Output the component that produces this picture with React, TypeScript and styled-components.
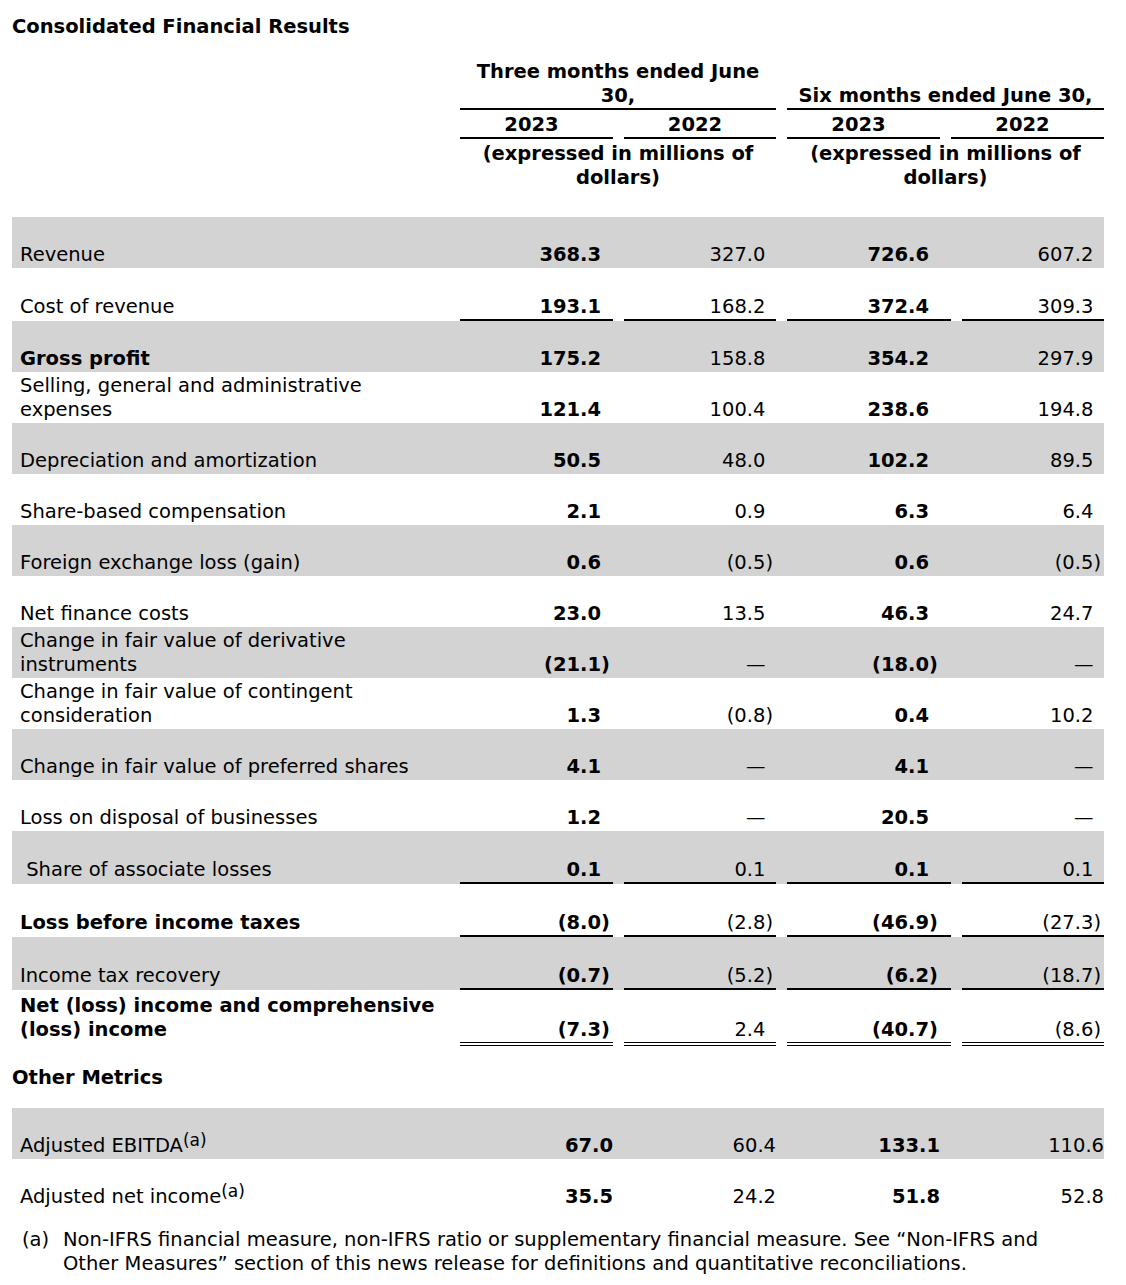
import React from "react";
import styled, { createGlobalStyle } from "styled-components";

const GlobalStyle = createGlobalStyle`
  html, body {
    margin: 0;
    padding: 0;
    background: #ffffff;
  }
  body {
    font-family: "DejaVu Sans", Verdana, sans-serif;
    font-size: 19.5px;
    line-height: 24px;
    color: #000000;
  }
`;

const Page = styled.div`
  width: 1092px;
  padding: 15px 0 24px 12px;
`;

const Heading = styled.h1<{ $gap?: number }>`
  margin: ${(p) => p.$gap ?? 0}px 0 0 0;
  font-size: 19.5px;
  line-height: 24px;
  font-weight: bold;
`;

const HeaderGrid = styled.div`
  display: grid;
  grid-template-columns: 437px 153px 152px 153px 153px;
  column-gap: 11px;
  margin-top: 21px;
  font-weight: bold;
  align-items: end;
`;

const PeriodCell = styled.div<{ $col: number }>`
  grid-column: ${(p) => p.$col} / span 2;
  text-align: center;
  border-bottom: 2px solid #000;
  white-space: nowrap;
`;

const YearCell = styled.div<{ $col: number }>`
  grid-column: ${(p) => p.$col};
  padding: 3px 10px 0 0;
  text-align: center;
  border-bottom: 2px solid #000;
`;

const UnitCell = styled.div<{ $col: number }>`
  grid-column: ${(p) => p.$col} / span 2;
  padding-top: 3px;
  text-align: center;
  white-space: nowrap;
`;

const Table = styled.div<{ $gap: number }>`
  margin-top: ${(p) => p.$gap}px;
`;

type Rule = "none" | "single" | "double";

const Row = styled.div<{ $shade: boolean; $height: number; $metric?: boolean }>`
  display: grid;
  grid-template-columns: ${(p) =>
    p.$metric ? "437px 153px 152px 153px 153px" : "437px 153px 152px 164px 142px"};
  column-gap: 11px;
  align-items: end;
  min-height: ${(p) => p.$height}px;
  background: ${(p) => (p.$shade ? "#d3d3d3" : "transparent")};
`;

const Label = styled.div<{ $bold?: boolean; $rule: Rule }>`
  padding: 0 8px ${(p) => (p.$rule === "double" ? 4 : p.$rule === "single" ? 2 : 1)}px 8px;
  white-space: nowrap;
  font-weight: ${(p) => (p.$bold ? "bold" : "normal")};
`;

const Value = styled.div<{ $bold?: boolean; $rule: Rule; $pad: number }>`
  text-align: right;
  white-space: nowrap;
  padding-right: ${(p) => p.$pad}px;
  padding-bottom: ${(p) => (p.$rule === "none" ? 1 : 0)}px;
  font-weight: ${(p) => (p.$bold ? "bold" : "normal")};
  border-bottom: ${(p) =>
    p.$rule === "single" ? "2px solid #000" : p.$rule === "double" ? "4px double #000" : "none"};
`;

const Paren = styled.span`
  visibility: hidden;
`;

const Sup = styled.sup`
  font-size: 17px;
  line-height: 0;
  vertical-align: 6px;
`;

const Footnote = styled.div`
  display: grid;
  grid-template-columns: 41px auto;
  margin-top: 18px;
  padding-left: 10px;
  white-space: nowrap;
`;

type DataRow = {
  label: string[];
  values: string[];
  bold?: boolean;
  shade?: boolean;
  rule?: Rule;
};

const rows: DataRow[] = [
  { label: ["Revenue"], values: ["368.3", "327.0", "726.6", "607.2"], shade: true },
  { label: ["Cost of revenue"], values: ["193.1", "168.2", "372.4", "309.3"], rule: "single" },
  { label: ["Gross profit"], bold: true, values: ["175.2", "158.8", "354.2", "297.9"], shade: true },
  { label: ["Selling, general and administrative", "expenses"], values: ["121.4", "100.4", "238.6", "194.8"] },
  { label: ["Depreciation and amortization"], values: ["50.5", "48.0", "102.2", "89.5"], shade: true },
  { label: ["Share-based compensation"], values: ["2.1", "0.9", "6.3", "6.4"] },
  { label: ["Foreign exchange loss (gain)"], values: ["0.6", "(0.5)", "0.6", "(0.5)"], shade: true },
  { label: ["Net finance costs"], values: ["23.0", "13.5", "46.3", "24.7"] },
  { label: ["Change in fair value of derivative", "instruments"], values: ["(21.1)", "—", "(18.0)", "—"], shade: true },
  { label: ["Change in fair value of contingent", "consideration"], values: ["1.3", "(0.8)", "0.4", "10.2"] },
  { label: ["Change in fair value of preferred shares"], values: ["4.1", "—", "4.1", "—"], shade: true },
  { label: ["Loss on disposal of businesses"], values: ["1.2", "—", "20.5", "—"] },
  { label: ["\u00a0Share of associate losses"], values: ["0.1", "0.1", "0.1", "0.1"], shade: true, rule: "single" },
  { label: ["Loss before income taxes"], bold: true, values: ["(8.0)", "(2.8)", "(46.9)", "(27.3)"], rule: "single" },
  { label: ["Income tax recovery"], values: ["(0.7)", "(5.2)", "(6.2)", "(18.7)"], shade: true, rule: "single" },
  {
    label: ["Net (loss) income and comprehensive", "(loss) income"],
    bold: true,
    values: ["(7.3)", "2.4", "(40.7)", "(8.6)"],
    rule: "double",
  },
];

const bodyPad = [3, 3, 13, 3];

const metrics = [
  { label: "Adjusted EBITDA", values: ["67.0", "60.4", "133.1", "110.6"], shade: true },
  { label: "Adjusted net income", values: ["35.5", "24.2", "51.8", "52.8"], shade: false },
];

const heightFor = (rule: Rule) => (rule === "double" ? 56 : rule === "single" ? 53 : 51);

const Amount: React.FC<{ v: string }> = ({ v }) => (
  <>
    {v}
    {v.endsWith(")") ? null : <Paren>)</Paren>}
  </>
);

export default function App() {
  return (
    <>
      <GlobalStyle />
      <Page>
        <Heading>Consolidated Financial Results</Heading>

        <HeaderGrid>
          <PeriodCell $col={2}>
            Three months ended June
            <br />
            30,
          </PeriodCell>
          <PeriodCell $col={4}>Six months ended June 30,</PeriodCell>
          <YearCell $col={2}>2023</YearCell>
          <YearCell $col={3}>2022</YearCell>
          <YearCell $col={4}>2023</YearCell>
          <YearCell $col={5}>2022</YearCell>
          <UnitCell $col={2}>
            (expressed in millions of
            <br />
            dollars)
          </UnitCell>
          <UnitCell $col={4}>
            (expressed in millions of
            <br />
            dollars)
          </UnitCell>
        </HeaderGrid>

        <Table $gap={27}>
          {rows.map((r, i) => {
            const rule = r.rule ?? "none";
            return (
              <Row key={i} $shade={!!r.shade} $height={heightFor(rule)}>
                <Label $bold={r.bold} $rule={rule}>
                  {r.label.map((line, j) => (
                    <React.Fragment key={j}>
                      {j > 0 && <br />}
                      {line}
                    </React.Fragment>
                  ))}
                </Label>
                {r.values.map((v, j) => (
                  <Value key={j} $bold={j % 2 === 0} $rule={rule} $pad={bodyPad[j]}>
                    <Amount v={v} />
                  </Value>
                ))}
              </Row>
            );
          })}
        </Table>

        <Heading $gap={20}>Other Metrics</Heading>

        <Table $gap={18}>
          {metrics.map((m, i) => (
            <Row key={i} $shade={m.shade} $height={51} $metric>
              <Label $rule="none">
                {m.label}
                <Sup>(a)</Sup>
              </Label>
              {m.values.map((v, j) => (
                <Value key={j} $bold={j % 2 === 0} $rule="none" $pad={0}>
                  {v}
                </Value>
              ))}
            </Row>
          ))}
        </Table>

        <Footnote>
          <span>(a)</span>
          <span>
            Non-IFRS financial measure, non-IFRS ratio or supplementary financial measure. See “Non-IFRS and
            <br />
            Other Measures” section of this news release for definitions and quantitative reconciliations.
          </span>
        </Footnote>
      </Page>
    </>
  );
}
